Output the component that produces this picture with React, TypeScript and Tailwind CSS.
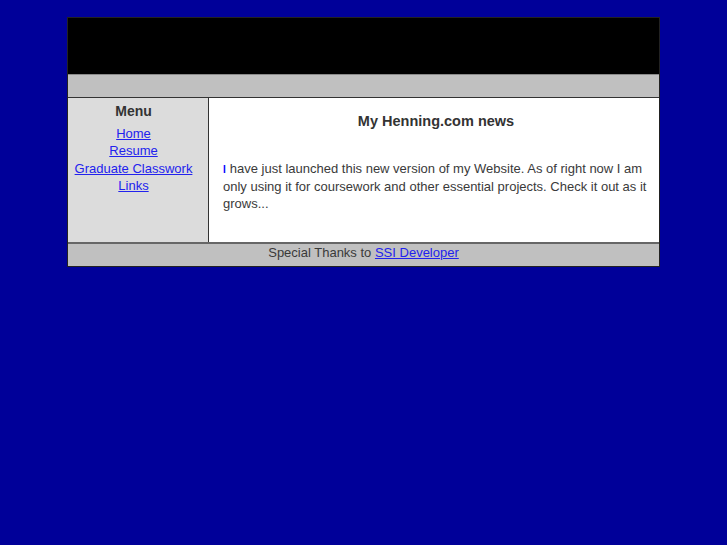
const links = ['Home', 'Resume', 'Graduate Classwork', 'Links'];

export default function App() {
  return (
    <div className="min-h-[545px] bg-[#000099] pt-[17px] font-['Liberation_Sans',Arial,sans-serif] text-[#333]">
      <div className="mx-auto w-[593px] border border-[#222]">
        {/* header */}
        <div className="h-[56px] bg-black" />
        <div className="h-[24px] border-t border-b border-t-[#8a8a8a] border-b-[#333] bg-[#c0c0c0]" />

        <div className="flex h-[144px]">
          <div className="w-[141px] border-r border-[#333] bg-[#dcdcdc] pr-[9px] pt-[4px] text-center">
            <div className="text-[14px] font-bold leading-[18px]">Menu</div>
            <ul className="mt-[5px] text-[13px] leading-[17.3px]">
              {links.map((l) => (
                <li key={l}>
                  <a href="#" className="text-[#2222ee] underline">
                    {l}
                  </a>
                </li>
              ))}
            </ul>
          </div>

          <div className="flex-1 bg-white pl-[14px] pr-[10px]">
            <h2 className="mt-[14px] text-center text-[14.5px] font-bold leading-[18px]">
              My Henning.com news
            </h2>
            <p className="mt-[30px] text-[13px] leading-[17.5px] text-[#3a3a3a]">
              <span className="mr-[4px] inline-block align-baseline text-[10px] leading-none font-bold text-[#0000ff]">I</span>
              have just launched this new version of my Website. As of right now I am only using it for
              coursework and other essential projects. Check it out as it grows...
            </p>
          </div>
        </div>

        <div className="h-[24px] border-t-2 border-[#666] bg-[#c0c0c0] text-center text-[13px] leading-[17px] text-[#3a3a3a]">
          Special Thanks to{' '}
          <a href="#" className="text-[#2222ee] underline">
            SSI Developer
          </a>
        </div>
      </div>
    </div>
  );
}
